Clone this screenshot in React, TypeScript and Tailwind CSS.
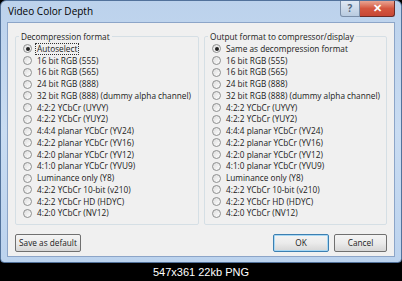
const formats = [
  '16 bit RGB (555)',
  '16 bit RGB (565)',
  '24 bit RGB (888)',
  '32 bit RGB (888) (dummy alpha channel)',
  '4:2:2 YCbCr (UYVY)',
  '4:2:2 YCbCr (YUY2)',
  '4:4:4 planar YCbCr (YV24)',
  '4:2:2 planar YCbCr (YV16)',
  '4:2:0 planar YCbCr (YV12)',
  '4:1:0 planar YCbCr (YVU9)',
  'Luminance only (Y8)',
  '4:2:2 YCbCr 10-bit (v210)',
  '4:2:2 YCbCr HD (HDYC)',
  '4:2:0 YCbCr (NV12)',
]

function Radio({ label, checked = false, focus = false }: { label: string; checked?: boolean; focus?: boolean }) {
  return (
    <div className="flex h-[11.75px] items-center gap-[4px]">
      <div className="flex h-[9px] w-[9px] shrink-0 items-center justify-center rounded-full border border-[#8e8f8f] bg-gradient-to-br from-[#dcdcdc] to-white">
        {checked && <div className="h-[4px] w-[4px] rounded-full bg-[#222]" />}
      </div>
      <span
        className={`whitespace-nowrap px-[1px] leading-[10px] ${focus ? 'outline outline-1 outline-dotted outline-[#333]' : ''}`}
      >
        {label}
      </span>
    </div>
  )
}

function Group({ title, first, w }: { title: string; first: string; w: string }) {
  return (
    <fieldset className={`${w} min-w-0 shrink-0 rounded-[2px] border border-[#d5dfe5] px-[7px] pt-[1px] pb-[5px]`}>
      <legend className="-ml-[4px] px-[2px] leading-[11px]">{title}</legend>
      <Radio label={first} checked focus={first === 'Autoselect'} />
      {formats.map((f) => (
        <Radio key={f} label={f} />
      ))}
    </fieldset>
  )
}

function Button({ children, def = false, w }: { children: string; def?: boolean; w: string }) {
  return (
    <div
      className={`flex h-[18px] ${w} items-center justify-center rounded-[2px] border bg-gradient-to-b from-[#f4f4f4] via-[#ebebeb] to-[#d6d6d6] ${
        def ? 'border-[#3c7fb1] shadow-[inset_0_0_0_1px_#a8d8f4]' : 'border-[#707070]'
      }`}
    >
      {children}
    </div>
  )
}

export default function App() {
  return (
    <div className="flex h-[281px] w-[402px] flex-col overflow-hidden bg-black font-['Open_Sans',sans-serif] text-[8.25px] text-[#1a1a1a]">
      <div className="flex h-[263px] w-[402px] shrink-0 flex-col rounded-t-[6px] rounded-b-[4px] border border-[#52729b] bg-gradient-to-b from-[#bcd2ec] via-[#c9dcf2] to-[#bcd3ee] px-[6px] pb-[5px]">
        <div className="flex h-[21px] shrink-0 items-start justify-between">
          <span className="pl-[1px] pt-[4px] text-[10px] leading-[13px] text-black">Video Color Depth</span>
          <div className="flex">
            <div className="flex h-[16px] w-[20px] items-center justify-center rounded-bl-[3px] border border-t-0 border-[#7a8ea8] bg-gradient-to-b from-[#dfe8f3] to-[#b9cbe0] text-[10px] font-bold text-[#52657c]">
              ?
            </div>
            <div className="flex h-[16px] w-[35px] items-center justify-center rounded-br-[3px] border border-l-0 border-t-0 border-[#6b2b26] bg-gradient-to-b from-[#e8a493] via-[#d4563f] to-[#c74735] text-[11px] font-bold text-white">
              ✕
            </div>
          </div>
        </div>
        <div className="flex flex-1 flex-col border border-[#8ca5c8] bg-[#f0f0f0] px-[7px] pt-[8px]">
          <div className="flex gap-[5px]">
            <Group title="Decompression format" first="Autoselect" w="w-[184px]" />
            <Group title="Output format to compressor/display" first="Same as decompression format" w="w-[183px]" />
          </div>
          <div className="mt-[9px] flex w-[372px] items-center justify-between">
            <Button w="w-[66px]">Save as default</Button>
            <div className="flex gap-[5px]">
              <Button w="w-[56px]" def>
                OK
              </Button>
              <Button w="w-[53px]">Cancel</Button>
            </div>
          </div>
        </div>
      </div>
      <div className="flex flex-1 items-center justify-center font-['Liberation_Sans',sans-serif] text-[11px] text-white">
        547x361 22kb PNG
      </div>
    </div>
  )
}
